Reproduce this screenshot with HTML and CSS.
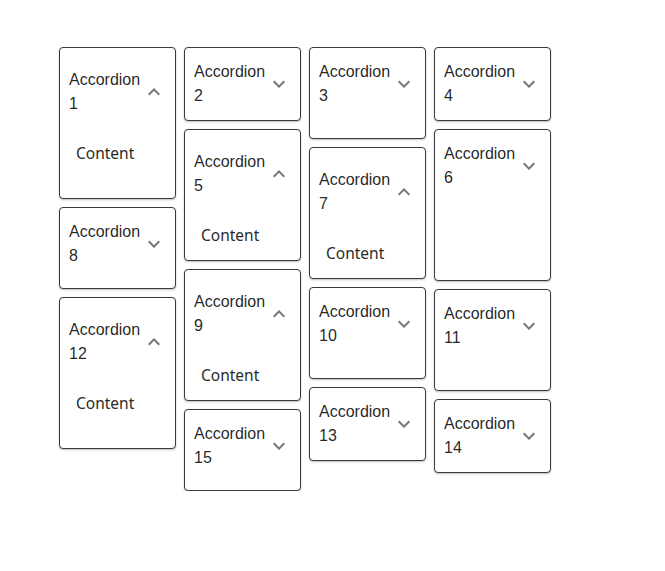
FILE: index.html
```html
<!DOCTYPE html>
<html lang="en">
<head>
  <meta charset="UTF-8" />
  <meta name="viewport" content="width=device-width, initial-scale=1" />
  <title>Masonry accordions</title>
  <link rel="stylesheet" href="styles.css">
</head>
<body>

<div class="masonry">

  <!-- колона 1 -->
  <div class="column">
    <div class="accordion open h-152">
      <div class="summary"><span class="title">Accordion 1</span><svg class="chevron" viewBox="0 0 24 24"><path d="M16.59 8.59 12 13.17 7.41 8.59 6 10l6 6 6-6z"/></svg></div>
      <div class="details">Content</div>
    </div>
    <div class="accordion h-82">
      <div class="summary"><span class="title">Accordion 8</span><svg class="chevron" viewBox="0 0 24 24"><path d="M16.59 8.59 12 13.17 7.41 8.59 6 10l6 6 6-6z"/></svg></div>
    </div>
    <div class="accordion open h-152">
      <div class="summary"><span class="title">Accordion 12</span><svg class="chevron" viewBox="0 0 24 24"><path d="M16.59 8.59 12 13.17 7.41 8.59 6 10l6 6 6-6z"/></svg></div>
      <div class="details">Content</div>
    </div>
  </div>

  <!-- колона 2 -->
  <div class="column">
    <div class="accordion">
      <div class="summary"><span class="title">Accordion 2</span><svg class="chevron" viewBox="0 0 24 24"><path d="M16.59 8.59 12 13.17 7.41 8.59 6 10l6 6 6-6z"/></svg></div>
    </div>
    <div class="accordion open">
      <div class="summary"><span class="title">Accordion 5</span><svg class="chevron" viewBox="0 0 24 24"><path d="M16.59 8.59 12 13.17 7.41 8.59 6 10l6 6 6-6z"/></svg></div>
      <div class="details">Content</div>
    </div>
    <div class="accordion open">
      <div class="summary"><span class="title">Accordion 9</span><svg class="chevron" viewBox="0 0 24 24"><path d="M16.59 8.59 12 13.17 7.41 8.59 6 10l6 6 6-6z"/></svg></div>
      <div class="details">Content</div>
    </div>
    <div class="accordion h-82">
      <div class="summary"><span class="title">Accordion 15</span><svg class="chevron" viewBox="0 0 24 24"><path d="M16.59 8.59 12 13.17 7.41 8.59 6 10l6 6 6-6z"/></svg></div>
    </div>
  </div>

  <!-- колона 3 -->
  <div class="column">
    <div class="accordion h-92">
      <div class="summary"><span class="title">Accordion 3</span><svg class="chevron" viewBox="0 0 24 24"><path d="M16.59 8.59 12 13.17 7.41 8.59 6 10l6 6 6-6z"/></svg></div>
    </div>
    <div class="accordion open">
      <div class="summary"><span class="title">Accordion 7</span><svg class="chevron" viewBox="0 0 24 24"><path d="M16.59 8.59 12 13.17 7.41 8.59 6 10l6 6 6-6z"/></svg></div>
      <div class="details">Content</div>
    </div>
    <div class="accordion h-92">
      <div class="summary"><span class="title">Accordion 10</span><svg class="chevron" viewBox="0 0 24 24"><path d="M16.59 8.59 12 13.17 7.41 8.59 6 10l6 6 6-6z"/></svg></div>
    </div>
    <div class="accordion">
      <div class="summary"><span class="title">Accordion 13</span><svg class="chevron" viewBox="0 0 24 24"><path d="M16.59 8.59 12 13.17 7.41 8.59 6 10l6 6 6-6z"/></svg></div>
    </div>
  </div>

  <!-- колона 4 -->
  <div class="column">
    <div class="accordion">
      <div class="summary"><span class="title">Accordion 4</span><svg class="chevron" viewBox="0 0 24 24"><path d="M16.59 8.59 12 13.17 7.41 8.59 6 10l6 6 6-6z"/></svg></div>
    </div>
    <div class="accordion h-152">
      <div class="summary"><span class="title">Accordion 6</span><svg class="chevron" viewBox="0 0 24 24"><path d="M16.59 8.59 12 13.17 7.41 8.59 6 10l6 6 6-6z"/></svg></div>
    </div>
    <div class="accordion h-102">
      <div class="summary"><span class="title">Accordion 11</span><svg class="chevron" viewBox="0 0 24 24"><path d="M16.59 8.59 12 13.17 7.41 8.59 6 10l6 6 6-6z"/></svg></div>
    </div>
    <div class="accordion">
      <div class="summary"><span class="title">Accordion 14</span><svg class="chevron" viewBox="0 0 24 24"><path d="M16.59 8.59 12 13.17 7.41 8.59 6 10l6 6 6-6z"/></svg></div>
    </div>
  </div>

</div>

</body>
</html>
```

FILE: styles.css
```css
body {
  margin: 0;
  background: #fff;
  font-family: 'Liberation Sans', Arial, sans-serif;
  color: rgba(0,0,0,0.87);
}
.masonry {
  display: flex;
  align-items: flex-start;
  gap: 8px;
  padding: 47px 0 0 59px;
}
.column {
  width: 117px;
  display: flex;
  flex-direction: column;
  gap: 8px;
}
.accordion {
  box-sizing: border-box;
  background: #fff;
  border: 1px solid #3a3a3a;
  border-radius: 4px;
  box-shadow: 0 1px 2px rgba(0,0,0,0.25);
}
.h-82 { min-height: 82px; }
.h-92 { min-height: 92px; }
.h-102 { min-height: 102px; }
.h-152 { min-height: 152px; }
.summary {
  display: flex;
  align-items: center;
  padding: 12px 9px 12px 9px;
}
.accordion.open .summary {
  padding-top: 20px;
  padding-bottom: 20px;
}
.title {
  flex: 1;
  font-size: 16px;
  line-height: 24px;
}
.chevron {
  width: 24px;
  height: 24px;
  flex: none;
  fill: #757575;
}
.accordion.open .chevron {
  transform: rotate(180deg);
}
.details {
  padding: 5px 16px 13px;
  font-family: 'Noto Sans', sans-serif;
  font-size: 15.5px;
  line-height: 24px;
  color: #2b2b2b;
}
```
